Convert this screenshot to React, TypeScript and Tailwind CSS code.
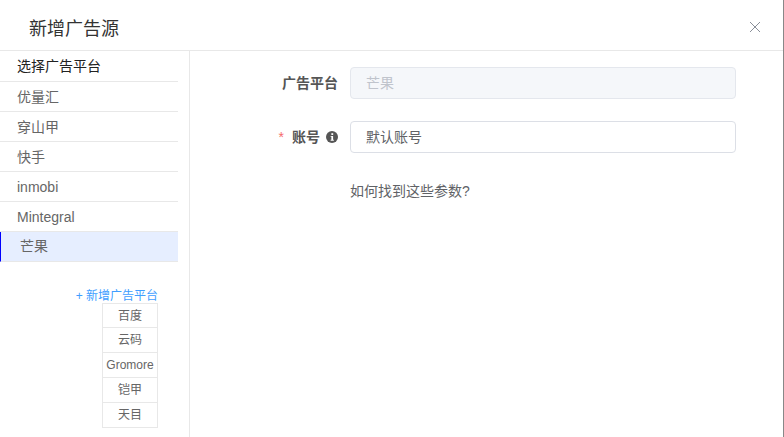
import React from "react";

const rows = ["优量汇", "穿山甲", "快手", "inmobi", "Mintegral"];
const extra = ["百度", "云码", "Gromore", "铠甲", "天目"];

export default function App() {
  return (
    <div className="w-[784px] h-[437px] overflow-hidden bg-white flex font-['Liberation_Sans','Noto_Sans_CJK_SC',sans-serif]">
      <div className="flex-1 flex flex-col min-w-0">
        <div className="h-[51px] shrink-0 border-b border-[#e8e8e8] flex items-center justify-between pl-[29px] pr-[22px]">
          <span className="text-[18px] text-[#333] mt-[8px]">新增广告源</span>
          <svg width="12" height="12" viewBox="0 0 12 12" className="text-[#8a8f99] mt-[4px]">
            <path d="M1 1L11 11M11 1L1 11" stroke="currentColor" strokeWidth="1" fill="none" />
          </svg>
        </div>
        <div className="flex-1 flex min-h-0">
          <div className="w-[190px] shrink-0 border-r border-[#e8e8e8] pr-[11px]">
            <div className="h-[31px] border-b border-[#e8e8e8] pl-[17px] pt-[1px] flex items-center text-[14px] text-[#222]">选择广告平台</div>
            {rows.map((r) => (
              <div key={r} className="h-[30px] border-b border-[#e8e8e8] pl-[17px] pt-[2px] flex items-center text-[14px] text-[#666]">{r}</div>
            ))}
            <div className="h-[30px] border-b border-[#e8e8e8] border-l border-l-[#0000ff] bg-[#e6eeff] pl-[19px] flex items-center text-[14px] text-[#666]">芒果</div>
            <div className="mt-[26px] flex flex-col items-end pr-[20px]">
              <div className="text-[12px] text-[#409eff] leading-[16px] h-[16px] whitespace-nowrap">+ 新增广告平台</div>
              <div className="w-[56px] border border-[#e8e8e8] mt-[-1px]">
                {extra.map((e, i) => (
                  <div
                    key={e}
                    className={`flex items-center justify-center text-[12px] text-[#666] ${
                      i === 0 ? "h-[24px]" : i === extra.length - 1 ? "h-[24px]" : "h-[25px]"
                    } ${i < extra.length - 1 ? "border-b border-[#e8e8e8]" : ""}`}
                  >
                    {e}
                  </div>
                ))}
              </div>
            </div>
          </div>
          <div className="flex-1 pt-[16px] pl-[80px] pr-[47px]">
            <div className="flex items-center h-[32px]">
              <div className="w-[80px] pr-[12px] text-right text-[14px] font-bold text-[#555] whitespace-nowrap">广告平台</div>
              <div className="flex-1 h-[32px] rounded-[4px] border border-[#e4e7ed] bg-[#f5f7fa] px-[15px] flex items-center text-[14px] text-[#c0c4cc]">芒果</div>
            </div>
            <div className="flex items-center h-[32px] mt-[22px]">
              <div className="w-[80px] pr-[12px] flex items-center justify-end text-[14px] font-bold text-[#555] whitespace-nowrap">
                <span className="text-[#f56c6c] font-normal mr-[8px]">*</span>
                <span>账号</span>
                <svg width="12" height="12" viewBox="0 0 13 13" className="ml-[6px] shrink-0">
                  <circle cx="6.5" cy="6.5" r="6.5" fill="#555" />
                  <rect x="5.8" y="2.4" width="2" height="1.9" fill="#fff" />
                  <path d="M5 5.4H7.7V9.6H8.5V10.6H5V9.6H5.8V6.3H5Z" fill="#fff" />
                </svg>
              </div>
              <div className="flex-1 h-[32px] rounded-[4px] border border-[#dcdfe6] bg-white px-[15px] flex items-center text-[14px] text-[#606266]">默认账号</div>
            </div>
            <div className="mt-[22px] pl-[80px] h-[32px] text-[14px] text-[#606266] flex items-center">如何找到这些参数?</div>
          </div>
        </div>
      </div>
      <div className="w-[1px] bg-[#888] shrink-0" />
    </div>
  );
}
